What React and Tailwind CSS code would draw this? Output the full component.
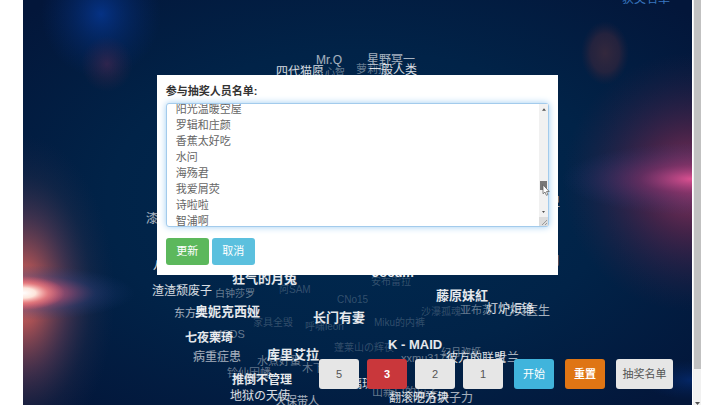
import { useLayoutEffect, useRef } from 'react';

const FAINT = 'text-white/20';
const DIM = 'text-white/40';
const MID = 'text-white/65';
const BRIGHT = 'text-white/85';
const FRONT = 'text-white/90 font-bold';

const S = 'text-[10px]';
const M = 'text-[11px]';
const L = 'text-[12px]';
const XL = 'text-[13px]';

// text, left, vertical centre, size, tone
const NAMES = [
  ['Mr.Q', 293, 60, L, MID],
  ['星野冥一', 344, 60, L, MID],
  ['心智', 302, 73, S, DIM],
  ['四代猫愿', 253, 72, L, BRIGHT],
  ['萝莉控', 333, 69, M, DIM],
  ['一般人类', 346, 70, L, BRIGHT],
  ['漆黑', 123, 219, L, MID],
  ['星卫', 513, 202, L, MID],
  ['小明', 512, 261, L, MID],
  ['八云', 130, 266, L, BRIGHT],
  ['安布雷拉', 348, 282, S, FAINT],
  ['Jocum', 349, 273, XL, FRONT],
  ['狂气的月兔', 209, 279, XL, FRONT],
  ['阿SAM', 256, 290, S, FAINT],
  ['白钟莎罗', 192, 294, S, DIM],
  ['渣渣颓废子', 129, 291, L, BRIGHT],
  ['CNo15', 314, 300, S, FAINT],
  ['家具全毁', 230, 323, S, FAINT],
  ['东方红', 151, 313, M, MID],
  ['奥妮克西娅', 172, 312, XL, FRONT],
  ['MSDS', 190, 334, M, DIM],
  ['七夜栗琦', 162, 338, L, FRONT],
  ['病重症患', 170, 357, L, MID],
  ['水煮好蛋', 234, 361, M, DIM],
  ['库里艾拉', 244, 355, XL, FRONT],
  ['木下', 279, 368, M, DIM],
  ['铃仙因幡', 204, 373, M, DIM],
  ['推倒不管理', 209, 380, L, FRONT],
  ['久保带人', 252, 401, M, MID],
  ['地狱の天使', 207, 396, L, BRIGHT],
  ['yovory', 289, 407, M, BRIGHT],
  ['呼啸leon', 282, 327, S, FAINT],
  ['长门有妻', 290, 318, XL, FRONT],
  ['Miku的内裤', 351, 323, S, FAINT],
  ['蓬莱山の辉夜', 311, 348, S, FAINT],
  ['K - MAID', 365, 345, XL, FRONT],
  ['藤原妹紅', 413, 296, XL, FRONT],
  ['沙瀑孤魂', 398, 312, S, FAINT],
  ['亚布苏', 437, 310, M, DIM],
  ['心灵医生', 479, 311, L, MID],
  ['灯炉炬锋', 463, 309, L, BRIGHT],
  ['xxmu317', 378, 358, M, DIM],
  ['幻月弥姬', 418, 353, S, DIM],
  ['士兰', 472, 358, L, MID],
  ['彼方的联盟', 423, 358, L, BRIGHT],
  ['琉璃琉璃', 315, 384, L, BRIGHT],
  ['山新口的拉子', 349, 392, M, DIM],
  ['汐洛尹子力', 390, 398, L, MID],
  ['翻滚吧方块', 366, 398, L, BRIGHT],
];

const ENTRANTS = ['阳光温暖空屋', '罗辑和庄颜', '香蕉太好吃', '水问', '海殇君', '我爱屑荧', '诗啦啦', '智浦啊'].join('\n');

function Backdrop() {
  return (
    <svg className="absolute inset-0 h-full w-full" viewBox="0 0 669 405" preserveAspectRatio="none" aria-hidden="true">
      <defs>
        <radialGradient id="base" cx="50%" cy="50%" r="68%">
          <stop offset="0" stopColor="#002a50" />
          <stop offset="0.55" stopColor="#012348" />
          <stop offset="1" stopColor="#03163a" />
        </radialGradient>
        <radialGradient id="blue">
          <stop offset="0" stopColor="#063a9c" stopOpacity="0.75" />
          <stop offset="0.5" stopColor="#05307f" stopOpacity="0.4" />
          <stop offset="1" stopColor="#042a6d" stopOpacity="0" />
        </radialGradient>
        <radialGradient id="rust">
          <stop offset="0" stopColor="#4c2850" stopOpacity="0.6" />
          <stop offset="1" stopColor="#3a2446" stopOpacity="0" />
        </radialGradient>
        <radialGradient id="brown">
          <stop offset="0" stopColor="#402b3c" stopOpacity="0.8" />
          <stop offset="0.6" stopColor="#36263c" stopOpacity="0.65" />
          <stop offset="1" stopColor="#25203c" stopOpacity="0" />
        </radialGradient>
        <radialGradient id="coral">
          <stop offset="0" stopColor="#ff7460" stopOpacity="0.95" />
          <stop offset="0.2" stopColor="#d8605a" stopOpacity="0.75" />
          <stop offset="0.5" stopColor="#84485a" stopOpacity="0.45" />
          <stop offset="0.75" stopColor="#483850" stopOpacity="0.2" />
          <stop offset="1" stopColor="#2a2e50" stopOpacity="0" />
        </radialGradient>
        <radialGradient id="haze">
          <stop offset="0" stopColor="#e87c98" stopOpacity="0.9" />
          <stop offset="0.4" stopColor="#a0507c" stopOpacity="0.6" />
          <stop offset="0.65" stopColor="#344480" stopOpacity="0.35" />
          <stop offset="1" stopColor="#1c3c74" stopOpacity="0" />
        </radialGradient>
        <radialGradient id="core">
          <stop offset="0" stopColor="#ffffff" />
          <stop offset="0.3" stopColor="#ffece0" stopOpacity="0.95" />
          <stop offset="0.6" stopColor="#ff8c84" stopOpacity="0.6" />
          <stop offset="1" stopColor="#f0606c" stopOpacity="0" />
        </radialGradient>
        <radialGradient id="pink">
          <stop offset="0" stopColor="#c83c6c" stopOpacity="0.75" />
          <stop offset="0.4" stopColor="#82284e" stopOpacity="0.5" />
          <stop offset="1" stopColor="#382044" stopOpacity="0" />
        </radialGradient>
        <radialGradient id="beam">
          <stop offset="0" stopColor="#e8569a" stopOpacity="0.85" />
          <stop offset="0.4" stopColor="#843878" stopOpacity="0.45" />
          <stop offset="1" stopColor="#283c7c" stopOpacity="0" />
        </radialGradient>
      </defs>
      <rect width="669" height="405" fill="url(#base)" />
      <ellipse cx="78" cy="14" rx="60" ry="64" fill="url(#blue)" />
      <ellipse cx="84" cy="64" rx="26" ry="28" fill="url(#rust)" />
      <ellipse cx="582" cy="53" rx="24" ry="32" fill="url(#brown)" />
      <ellipse cx="0" cy="295" rx="92" ry="160" fill="url(#coral)" />
      <ellipse cx="0" cy="293" rx="112" ry="28" fill="url(#haze)" />
      <ellipse cx="0" cy="293" rx="42" ry="17" fill="url(#core)" />
      <ellipse cx="669" cy="182" rx="130" ry="130" fill="url(#pink)" />
      <ellipse cx="669" cy="179" rx="130" ry="36" fill="url(#beam)" />
      <ellipse cx="669" cy="380" rx="50" ry="20" fill="url(#blue)" opacity="0.6" />
    </svg>
  );
}

function Roster() {
  const box = useRef(null);
  useLayoutEffect(() => {
    box.current.scrollTop = 3;
  }, []);
  return (
    <div className="relative mt-1 flex h-[124px] rounded-[3px] border border-[#a3cbec] bg-white shadow-[0_0_7px_#9fcdf2]">
      <textarea
        id="entrants"
        ref={box}
        defaultValue={ENTRANTS}
        spellCheck={false}
        className="block min-w-0 flex-1 resize-none overflow-hidden bg-transparent px-[9px] text-[11px] leading-4 text-[#666] outline-none"
      />
      <div className="flex w-[9px] flex-col items-center bg-[#f1f1f1]" aria-hidden="true">
        <svg className="mt-1 h-[3px] w-[4px]" viewBox="0 0 5 3"><path d="M0 3 2.5 0 5 3z" fill="#505050" /></svg>
        <div className="mt-[70px] h-[9px] w-[7px] bg-[#787878]" />
        <div className="flex-1" />
        <svg className="mb-1 h-[2px] w-[3px]" viewBox="0 0 5 3"><path d="M0 0h5L2.5 3z" fill="#505050" /></svg>
        <svg className="h-[9px] w-[9px] bg-[#dcdcdc]" viewBox="0 0 9 9"><path d="M3 8 8 3M6 8 8 6" stroke="#999" strokeWidth="1" /></svg>
      </div>
      <svg className="absolute right-[-2px] top-[80px] h-[12px] w-[8px]" viewBox="0 0 8 12" aria-hidden="true">
        <path d="M1 .8v9l2-1.8 1.4 3.3 1.5-.7L4.500 7.500H7.200z" fill="#fff" stroke="#555" strokeWidth="0.7" />
      </svg>
    </div>
  );
}

const PLAIN = 'w-[40px] bg-[#e6e6e6] text-[#555]';

function DrawButton({ tone, children }) {
  return <button type="button" className={`h-[30px] rounded-[3px] text-[11px] ${tone}`}>{children}</button>;
}

export default function App() {
  return (
    <div className="flex h-screen overflow-hidden bg-white pl-[23px] pr-[19px] font-['Liberation_Sans','Noto_Sans_CJK_SC',sans-serif]">
      <main className="relative flex min-w-0 flex-1 flex-col overflow-hidden bg-[#02204a]">
        <Backdrop />
        <div className="absolute inset-0">
          {NAMES.map(([text, left, middle, size, tone]) => (
            <span key={text} className={`absolute -translate-y-1/2 whitespace-nowrap leading-4 ${size} ${tone}`} style={{ left, top: middle }}>
              {text}
            </span>
          ))}
        </div>
        <header className="relative -mt-[9px] flex justify-end pr-[22px]">
          <a href="#winners" className="text-[12px] leading-4 text-[#3a78c0]">获奖名单</a>
        </header>
        <footer className="relative mt-auto flex justify-end gap-[11px] pb-4 pr-[19px]">
          <div className="flex gap-2">
            <DrawButton tone={PLAIN}>5</DrawButton>
            <DrawButton tone="w-[40px] bg-[#c9373b] text-white font-bold">3</DrawButton>
            <DrawButton tone={PLAIN}>2</DrawButton>
            <DrawButton tone={PLAIN}>1</DrawButton>
          </div>
          <DrawButton tone="w-[40px] bg-[#40b4dc] text-white">开始</DrawButton>
          <DrawButton tone="w-[40px] bg-[#df7514] text-white font-bold">重置</DrawButton>
          <DrawButton tone="w-[57px] bg-[#e6e6e6] text-[#555]">抽奖名单</DrawButton>
        </footer>
        <div role="dialog" aria-labelledby="roster-title" className="absolute left-1/5 top-[75px] w-3/5 bg-white px-[9px] pb-[10px] pt-2">
          <label id="roster-title" htmlFor="entrants" className="block text-[11px] font-bold leading-4 text-[#333]">参与抽奖人员名单:</label>
          <Roster />
          <div className="mt-[11px] flex gap-[3px]">
            <button type="button" className="h-[27px] w-[43px] rounded-[3px] bg-[#5cb85c] text-[11px] text-white">更新</button>
            <button type="button" className="h-[27px] w-[43px] rounded-[3px] bg-[#5bc0de] text-[11px] text-white">取消</button>
          </div>
        </div>
      </main>
      <div className="flex w-[9px] flex-col items-center border-l border-white bg-[#f1f1f1]" aria-hidden="true">
        <div className="h-[369px] w-[7px] bg-[#c1c1c1]" />
        <div className="flex-1" />
        <svg className="h-[3px] w-[5px]" viewBox="0 0 5 3"><path d="M0 0h5L2.500 3z" fill="#505050" /></svg>
      </div>
    </div>
  );
}
